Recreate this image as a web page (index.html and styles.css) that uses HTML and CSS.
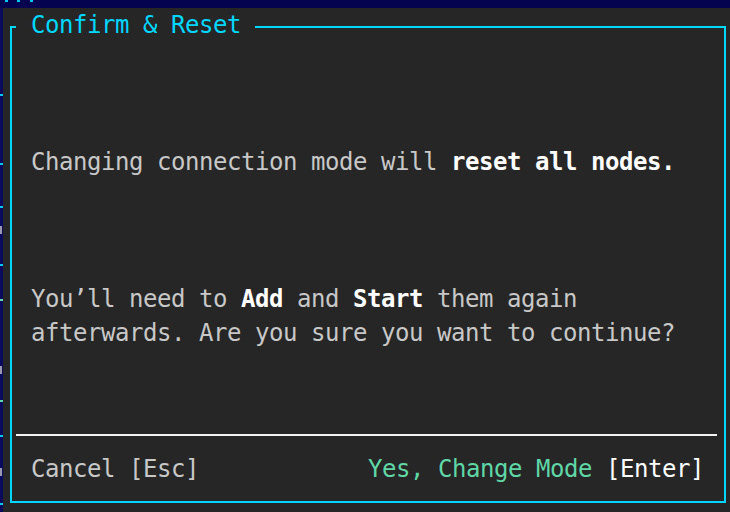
FILE: index.html
```html
<!DOCTYPE html>
<html lang="en">
<head>
<meta charset="utf-8">
<title>Confirm &amp; Reset</title>
<link rel="stylesheet" href="styles.css">
</head>
<body>
<div class="screen">
  <div class="topband"></div>
  <div class="leftstrip"></div>
  <div class="panel">
    <fieldset class="dialog">
      <legend class="title">Confirm &amp; Reset</legend>
      <div class="body">
        <p class="msg msg-first">Changing connection mode will <b class="em">reset all nodes.</b></p>
        <p class="msg">You’ll need to <b class="em">Add</b> and <b class="em">Start</b> them again<br>afterwards. Are you sure you want to continue?</p>
      </div>
      <div class="sep"></div>
      <div class="footer">
        <span class="cancel">Cancel [Esc]</span>
        <span class="confirm"><span class="yes">Yes, Change Mode</span> <span class="key">[Enter]</span></span>
      </div>
    </fieldset>
  </div>
</div>
</body>
</html>
```

FILE: styles.css
```css
html, body {
  margin: 0;
  padding: 0;
  background: #05055a;
}

body {
  font-family: "DejaVu Sans Mono", "Liberation Mono", monospace;
  font-size: 24px;
  letter-spacing: -0.45px;
  line-height: 34.25px;
  color: #c8c8c8;
}

.screen {
  width: 730px;
  height: 512px;
  display: grid;
  grid-template-columns: 3px 727px;
  grid-template-rows: 8px 504px;
  overflow: hidden;
}

.topband {
  grid-column: 1 / 3;
  background:
    linear-gradient(#00c8f0, #00c8f0) 5px 0 / 3px 2px no-repeat,
    linear-gradient(#00c8f0, #00c8f0) 17px 0 / 3px 2px no-repeat,
    linear-gradient(#00c8f0, #00c8f0) 30px 0 / 3px 2px no-repeat,
    #03034f;
}

.leftstrip {
  background:
    linear-gradient(#00c8f0, #00c8f0) 0 86px / 3px 2px no-repeat,
    linear-gradient(#00c8f0, #00c8f0) 0 155px / 3px 2px no-repeat,
    linear-gradient(#9a9ab0, #9a9ab0) 0 218px / 2px 8px no-repeat,
    linear-gradient(#00c8f0, #00c8f0) 0 198px / 3px 2px no-repeat,
    linear-gradient(#00c8f0, #00c8f0) 0 256px / 3px 2px no-repeat,
    linear-gradient(#5fd7af, #5fd7af) 0 291px / 3px 2px no-repeat,
    linear-gradient(#9a9ab0, #9a9ab0) 0 358px / 2px 8px no-repeat,
    linear-gradient(#5fd7af, #5fd7af) 0 392px / 3px 2px no-repeat,
    linear-gradient(#00c8f0, #00c8f0) 0 427px / 3px 2px no-repeat,
    linear-gradient(#9a9ab0, #9a9ab0) 0 460px / 2px 8px no-repeat,
    linear-gradient(#00c8f0, #00c8f0) 0 495px / 3px 2px no-repeat,
    #0b0b5e;
}

.panel {
  background: #262626;
  padding-left: 7px;
}

.dialog {
  box-sizing: border-box;
  width: 716px;
  height: 495px;
  margin: 0;
  padding: 0 4px;
  border: 2px solid #00d7ff;
  min-width: 0;
}

.title {
  padding: 0 14px 4px 15px;
  color: #00d7ff;
  line-height: 34.25px;
}

.body {
  margin-top: -4px;
  padding: 102.75px 0 0 15px;
  height: 376.75px;
  box-sizing: border-box;
}

.msg {
  margin: 0;
  white-space: pre;
}

.msg-first {
  margin-bottom: 102.75px;
}

.em {
  color: #ffffff;
  font-weight: bold;
}

.sep {
  height: 2px;
  margin: 15px 3px 15.5px 0;
  background: #f2f2f2;
}

.footer {
  display: flex;
  justify-content: space-between;
  padding: 0 16px 0 15px;
  white-space: pre;
}

.cancel {
  color: #c8c8c8;
}

.yes {
  color: #5fd7a7;
}

.key {
  color: #ffffff;
}
```
